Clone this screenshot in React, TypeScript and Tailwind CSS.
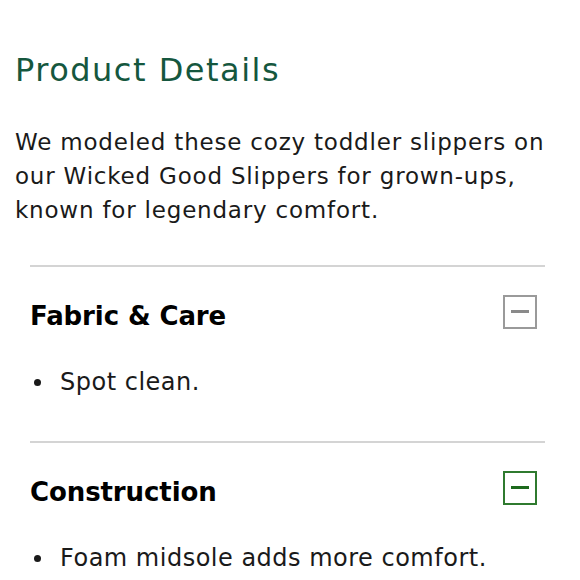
interface SectionProps {
  title: string
  items: string[]
  active?: boolean
}

function Section({ title, items, active }: SectionProps) {
  return (
    <div className="border-t-2 border-[#d4d4d4]">
      <div className="flex items-center justify-between pt-[31px] pb-[31px]">
        <h3 className="text-[26px] font-bold text-black leading-[36px] tracking-[-0.1px]">{title}</h3>
        <button
          className={
            active
              ? 'w-[34px] h-[34px] border-2 border-[#2f7a2f] flex items-center justify-center mr-[8px] -mt-[9px]'
              : 'w-[34px] h-[34px] border-2 border-[#9a9a9a] flex items-center justify-center mr-[8px] -mt-[9px]'
          }
        >
          <span
            className={
              active ? 'block w-[18px] h-[3px] bg-[#1d6a1d]' : 'block w-[18px] h-[3px] bg-[#8a8a8a]'
            }
          />
        </button>
      </div>
      <ul className="pb-[42px]">
        {items.map((it) => (
          <li
            key={it}
            className="flex items-center text-[24px] leading-[34px] text-[#1a1a1a] tracking-[0.5px]"
          >
            <span className="w-[7px] h-[7px] rounded-full bg-[#1a1a1a] ml-[4px] mr-[19px]" />
            {it}
          </li>
        ))}
      </ul>
    </div>
  )
}

export default function App() {
  return (
    <div className="w-[580px] h-[580px] overflow-hidden bg-white font-['DejaVu_Sans',sans-serif]">
      <div className="pl-[15px] pr-[30px] pt-[48px]">
        <h2 className="text-[32px] leading-[44px] text-[#15573e] tracking-[1.5px]">Product Details</h2>
        <p className="mt-[33px] text-[23px] leading-[34px] text-[#1a1a1a] tracking-[0.8px]">
          We modeled these cozy toddler slippers on our Wicked Good Slippers for grown-ups, known for
          legendary comfort.
        </p>
        <div className="ml-[15px] mr-[5px] mt-[38px]">
          <Section title="Fabric & Care" items={['Spot clean.']} />
          <Section title="Construction" items={['Foam midsole adds more comfort.']} active />
        </div>
      </div>
    </div>
  )
}
